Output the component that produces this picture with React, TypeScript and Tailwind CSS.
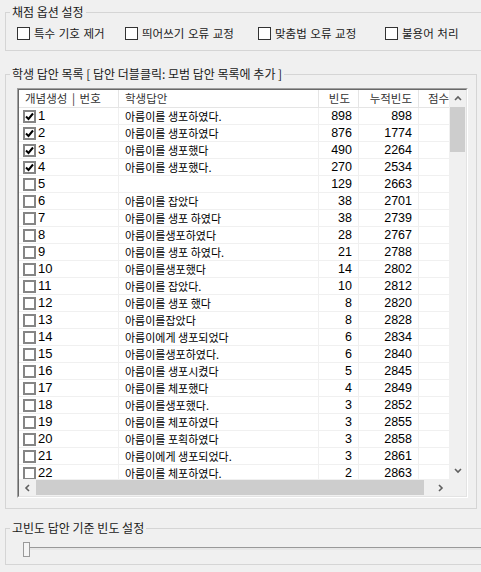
import React from "react";

type Row = { no: number; answer: string; freq: number; cum: number; checked: boolean };

const rows: Row[] = [
  { no: 1, answer: "아름이를 생포하였다.", freq: 898, cum: 898, checked: true },
  { no: 2, answer: "아름이를 생포하였다", freq: 876, cum: 1774, checked: true },
  { no: 3, answer: "아름이를 생포했다", freq: 490, cum: 2264, checked: true },
  { no: 4, answer: "아름이를 생포했다.", freq: 270, cum: 2534, checked: true },
  { no: 5, answer: "", freq: 129, cum: 2663, checked: false },
  { no: 6, answer: "아름이를 잡았다", freq: 38, cum: 2701, checked: false },
  { no: 7, answer: "아름이를 생포 하였다", freq: 38, cum: 2739, checked: false },
  { no: 8, answer: "아름이를생포하였다", freq: 28, cum: 2767, checked: false },
  { no: 9, answer: "아름이를 생포 하였다.", freq: 21, cum: 2788, checked: false },
  { no: 10, answer: "아름이를생포했다", freq: 14, cum: 2802, checked: false },
  { no: 11, answer: "아름이를 잡았다.", freq: 10, cum: 2812, checked: false },
  { no: 12, answer: "아름이를 생포 했다", freq: 8, cum: 2820, checked: false },
  { no: 13, answer: "아름이를잡았다", freq: 8, cum: 2828, checked: false },
  { no: 14, answer: "아름이에게 생포되었다", freq: 6, cum: 2834, checked: false },
  { no: 15, answer: "아름이를생포하였다.", freq: 6, cum: 2840, checked: false },
  { no: 16, answer: "아름이를 생포시켰다", freq: 5, cum: 2845, checked: false },
  { no: 17, answer: "아름이를 체포했다", freq: 4, cum: 2849, checked: false },
  { no: 18, answer: "아름이를생포했다.", freq: 3, cum: 2852, checked: false },
  { no: 19, answer: "아름이를 체포하였다", freq: 3, cum: 2855, checked: false },
  { no: 20, answer: "아름이를 포획하였다", freq: 3, cum: 2858, checked: false },
  { no: 21, answer: "아름이에게 생포되었다.", freq: 3, cum: 2861, checked: false },
  { no: 22, answer: "아름이를 체포하였다.", freq: 2, cum: 2863, checked: false },
];

const ko = "font-['Noto_Sans_CJK_KR',sans-serif]";
const num = "font-['Liberation_Sans','Noto_Sans_CJK_KR',sans-serif]";
const legend = `${ko} ml-[-7px] px-[2px] text-[12px] leading-[14px] text-[#1a1a1a]`;

function Chevron({ dir }: { dir: "up" | "down" | "left" | "right" }) {
  const d = {
    up: "M1 5 L4 2 L7 5",
    down: "M1 2 L4 5 L7 2",
    left: "M5 1 L2 4 L5 7",
    right: "M2 1 L5 4 L2 7",
  }[dir];
  return (
    <svg width="8" height="8" viewBox="0 0 8 8">
      <path d={d} fill="none" stroke="#606060" strokeWidth="1.6" />
    </svg>
  );
}

function OptionBox({ label, width }: { label: string; width: string }) {
  return (
    <div className={`flex items-center gap-[4px] ${width}`}>
      <span className="w-[13px] h-[13px] border border-[#333] bg-white shrink-0" />
      <span className={`${ko} text-[11.5px] leading-[13px] [word-spacing:1px] text-[#1a1a1a] whitespace-nowrap`}>
        {label}
      </span>
    </div>
  );
}

function RowCheck({ checked }: { checked: boolean }) {
  return (
    <span className="w-[13px] h-[13px] border-2 border-[#858585] bg-white shrink-0 flex items-center justify-center">
      {checked && (
        <svg width="9" height="9" viewBox="0 0 9 9">
          <path d="M1 4.5 L3.5 7 L8 1.5" fill="none" stroke="#000" strokeWidth="2" />
        </svg>
      )}
    </span>
  );
}

export default function App() {
  return (
    <div className="w-[481px] h-[572px] bg-[#f0f0f0] overflow-hidden pt-[5px]">
      {/* 채점 옵션 설정 */}
      <fieldset className="ml-[5px] w-[500px] border border-[#d5d5d5] pl-[11px] pb-[10px]">
        <legend className={legend}>채점 옵션 설정</legend>
        <div className="flex pt-[8px]">
          <OptionBox label="특수 기호 제거" width="w-[108px]" />
          <OptionBox label="띄어쓰기 오류 교정" width="w-[133px]" />
          <OptionBox label="맞춤법 오류 교정" width="w-[127px]" />
          <OptionBox label="불용어 처리" width="w-[100px]" />
        </div>
      </fieldset>

      {/* 학생 답안 목록 */}
      <fieldset className="mt-[16px] ml-[5px] w-[472px] border border-[#d5d5d5] pl-[11px] pb-[10px]">
        <legend className={legend}>학생 답안 목록 [ 답안 더블클릭: 모범 답안 목록에 추가 ]</legend>
        <div className="mt-[7px] w-[451px] h-[410px] border-l border-t border-[#a0a0a0] border-r-white border-b-white border-r border-b">
          <div className="w-full h-full border-l border-t border-[#696969] border-r-[#e3e3e3] border-b-[#e3e3e3] border-r border-b bg-white flex flex-col">
            <div className="flex flex-1 min-h-0">
              <div className="flex-1 min-w-0 overflow-hidden flex flex-col">
                {/* header */}
                <div className="flex h-[18px] shrink-0 border-b border-[#e5e5e5] text-[11.5px] leading-[17px] text-[#333]">
                  <div className={`${ko} w-[100px] shrink-0 pl-[6px] border-r border-[#e5e5e5] [word-spacing:2px]`}>
                    개념생성 | 번호
                  </div>
                  <div className={`${ko} w-[200px] shrink-0 pl-[6px] border-r border-[#e5e5e5]`}>학생답안</div>
                  <div className={`${ko} w-[40px] shrink-0 pr-[8px] text-right border-r border-[#e5e5e5]`}>빈도</div>
                  <div className={`${ko} w-[60px] shrink-0 pr-[6px] text-right border-r border-[#e5e5e5]`}>누적빈도</div>
                  <div className={`${ko} w-[60px] shrink-0 pl-[9px] whitespace-nowrap`}>점수</div>
                </div>
                {/* rows */}
                <div className="flex-1 overflow-hidden">
                  {rows.map((r) => (
                    <div key={r.no} className="flex h-[17px] border-b border-[#f0f0f0] text-black">
                      <div className="w-[100px] shrink-0 pl-[4px] flex items-center gap-[2px] border-r border-[#f0f0f0]">
                        <RowCheck checked={r.checked} />
                        <span className={`${num} text-[13px] leading-[16px]`}>{r.no}</span>
                      </div>
                      <div className={`${ko} w-[200px] shrink-0 pl-[6px] text-[11px] leading-[16px] border-r border-[#f0f0f0] whitespace-nowrap`}>
                        {r.answer}
                      </div>
                      <div className={`${num} w-[40px] shrink-0 pr-[6px] text-right text-[12.5px] leading-[16px] border-r border-[#f0f0f0]`}>
                        {r.freq}
                      </div>
                      <div className={`${num} w-[60px] shrink-0 pr-[6px] text-right text-[12.5px] leading-[16px] border-r border-[#f0f0f0]`}>
                        {r.cum}
                      </div>
                      <div className="w-[60px] shrink-0" />
                    </div>
                  ))}
                </div>
              </div>
              {/* vertical scrollbar */}
              <div className="w-[17px] shrink-0 bg-[#f0f0f0] flex flex-col">
                <div className="h-[17px] flex items-center justify-center">
                  <Chevron dir="up" />
                </div>
                <div className="flex-1 px-[1px]">
                  <div className="h-[45px] bg-[#cdcdcd]" />
                </div>
                <div className="h-[17px] flex items-center justify-center">
                  <Chevron dir="down" />
                </div>
              </div>
            </div>
            {/* horizontal scrollbar */}
            <div className="h-[17px] shrink-0 flex bg-[#f0f0f0]">
              <div className="w-[17px] flex items-center justify-center">
                <Chevron dir="left" />
              </div>
              <div className="flex-1 py-[1px] pr-[8px]">
                <div className="h-full bg-[#cdcdcd]" />
              </div>
              <div className="w-[17px] flex items-center justify-center">
                <Chevron dir="right" />
              </div>
              <div className="w-[17px]" />
            </div>
          </div>
        </div>
      </fieldset>

      {/* 고빈도 답안 기준 빈도 설정 */}
      <fieldset className="mt-[12px] ml-[5px] w-[500px] border border-[#d5d5d5] pl-[11px] pb-[7px]">
        <legend className={legend}>고빈도 답안 기준 빈도 설정</legend>
        <div className="relative mt-[7px] h-[15px]">
          <div className="absolute left-[6px] right-0 top-[5px] h-[3px] bg-[#e7e7e7] border-t border-[#999]" />
          <div className="absolute left-[6px] top-0 w-[7px] h-[15px] bg-[#f5f5f5] border border-[#9a9a9a]" />
        </div>
      </fieldset>
    </div>
  );
}
